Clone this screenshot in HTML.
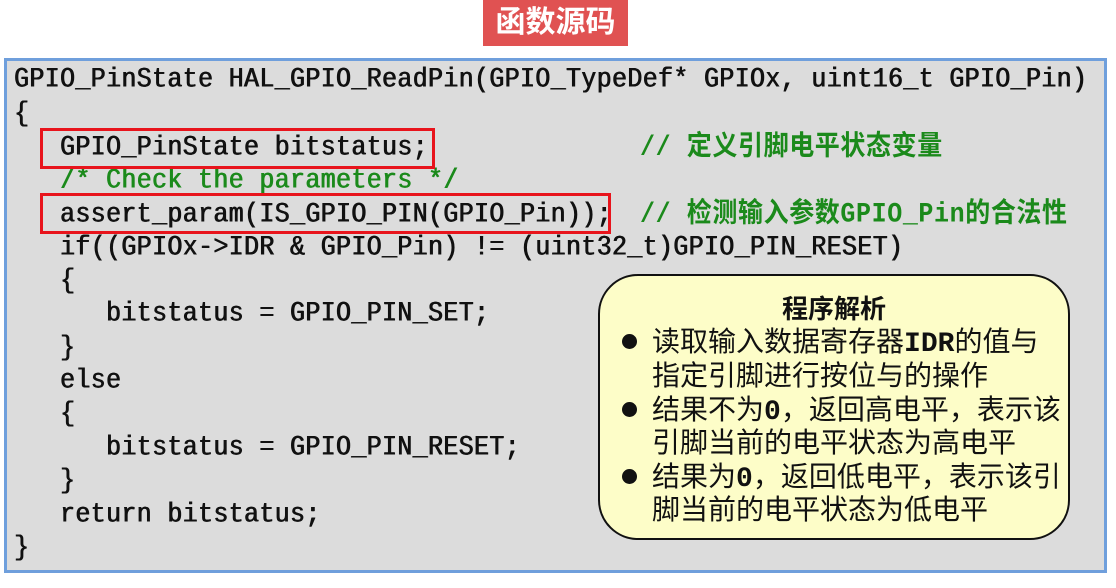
<!DOCTYPE html>
<html><head><meta charset="utf-8"><style>
body{margin:0;width:1116px;height:588px;background:#fff;position:relative;overflow:hidden;font-family:"Liberation Mono","Noto Sans CJK SC",monospace;}
.title{position:absolute;left:483px;top:0;width:145px;height:46px;background:#e05252;color:#fff;font:bold 30px "Liberation Sans","Noto Sans CJK SC",sans-serif;text-align:center;line-height:46px;}
.box{position:absolute;left:4px;top:58px;width:1097px;height:509px;background:#dcdcdc;border:3px solid #6f9fdc;box-sizing:content-box;}
.l{position:absolute;left:14px;font-size:25px;letter-spacing:0.33px;line-height:30px;white-space:pre;color:#111;text-shadow:0.5px 0 0 #111,-0.3px 0 0 #111;transform:scaleY(1.1);transform-origin:left center;}
.g{color:#1b8a1b;text-shadow:0.5px 0 0 #1b8a1b,-0.3px 0 0 #1b8a1b;}
.gb{font-weight:bold;text-shadow:none;letter-spacing:0.6px;}
.rb{position:absolute;border:3px solid #e8141c;}
.call{position:absolute;left:598px;top:274px;width:472px;height:266px;background:#fdfdc8;border:2px solid #111;border-radius:40px;box-sizing:border-box;font-family:"Liberation Sans","Noto Sans CJK SC",sans-serif;font-size:28px;color:#111;}
.call div{position:absolute;white-space:pre;line-height:32px;}
.call b{font-family:"Liberation Mono",monospace;}
.dot{left:22px;width:15px;height:15px;border-radius:50%;background:#111;}
</style></head><body>
<div class="title">函数源码</div>
<div class="box"></div>
<div class="l" style="top:65px">GPIO_PinState HAL_GPIO_ReadPin(GPIO_TypeDef* GPIOx, uint16_t GPIO_Pin)</div>
<div class="l" style="top:99px">{</div>
<div class="l" style="top:133px">   GPIO_PinState bitstatus;</div>
<div class="l g gb" style="top:133px;left:640px">// 定义引脚电平状态变量</div>
<div class="l g" style="top:166px">   /* Check the parameters */</div>
<div class="l" style="top:200px">   assert_param(IS_GPIO_PIN(GPIO_Pin));</div>
<div class="l g gb" style="top:200px;left:640px">// 检测输入参数GPIO_Pin的合法性</div>
<div class="l" style="top:233px">   if((GPIOx->IDR &amp; GPIO_Pin) != (uint32_t)GPIO_PIN_RESET)</div>
<div class="l" style="top:266px">   {</div>
<div class="l" style="top:299px">      bitstatus = GPIO_PIN_SET;</div>
<div class="l" style="top:333px">   }</div>
<div class="l" style="top:366px">   else</div>
<div class="l" style="top:399px">   {</div>
<div class="l" style="top:433px">      bitstatus = GPIO_PIN_RESET;</div>
<div class="l" style="top:466px">   }</div>
<div class="l" style="top:500px">   return bitstatus;</div>
<div class="l" style="top:533px">}</div>
<div class="rb" style="left:40px;top:128px;width:389px;height:35px"></div>
<div class="rb" style="left:40px;top:193px;width:565px;height:35px"></div>
<div class="call">
<div style="left:0;width:468px;text-align:center;top:17px;font-weight:bold;font-size:26px">程序解析</div>
<div class="dot" style="top:58px"></div>
<div style="left:52px;top:50px">读取输入数据寄存器<b>IDR</b>的值与</div>
<div style="left:52px;top:84px">指定引脚进行按位与的操作</div>
<div class="dot" style="top:126px"></div>
<div style="left:52px;top:118px">结果不为<b>0</b>，返回高电平，表示该</div>
<div style="left:52px;top:151px">引脚当前的电平状态为高电平</div>
<div class="dot" style="top:193px"></div>
<div style="left:52px;top:185px">结果为<b>0</b>，返回低电平，表示该引</div>
<div style="left:52px;top:218px">脚当前的电平状态为低电平</div>
</div>
</body></html>
